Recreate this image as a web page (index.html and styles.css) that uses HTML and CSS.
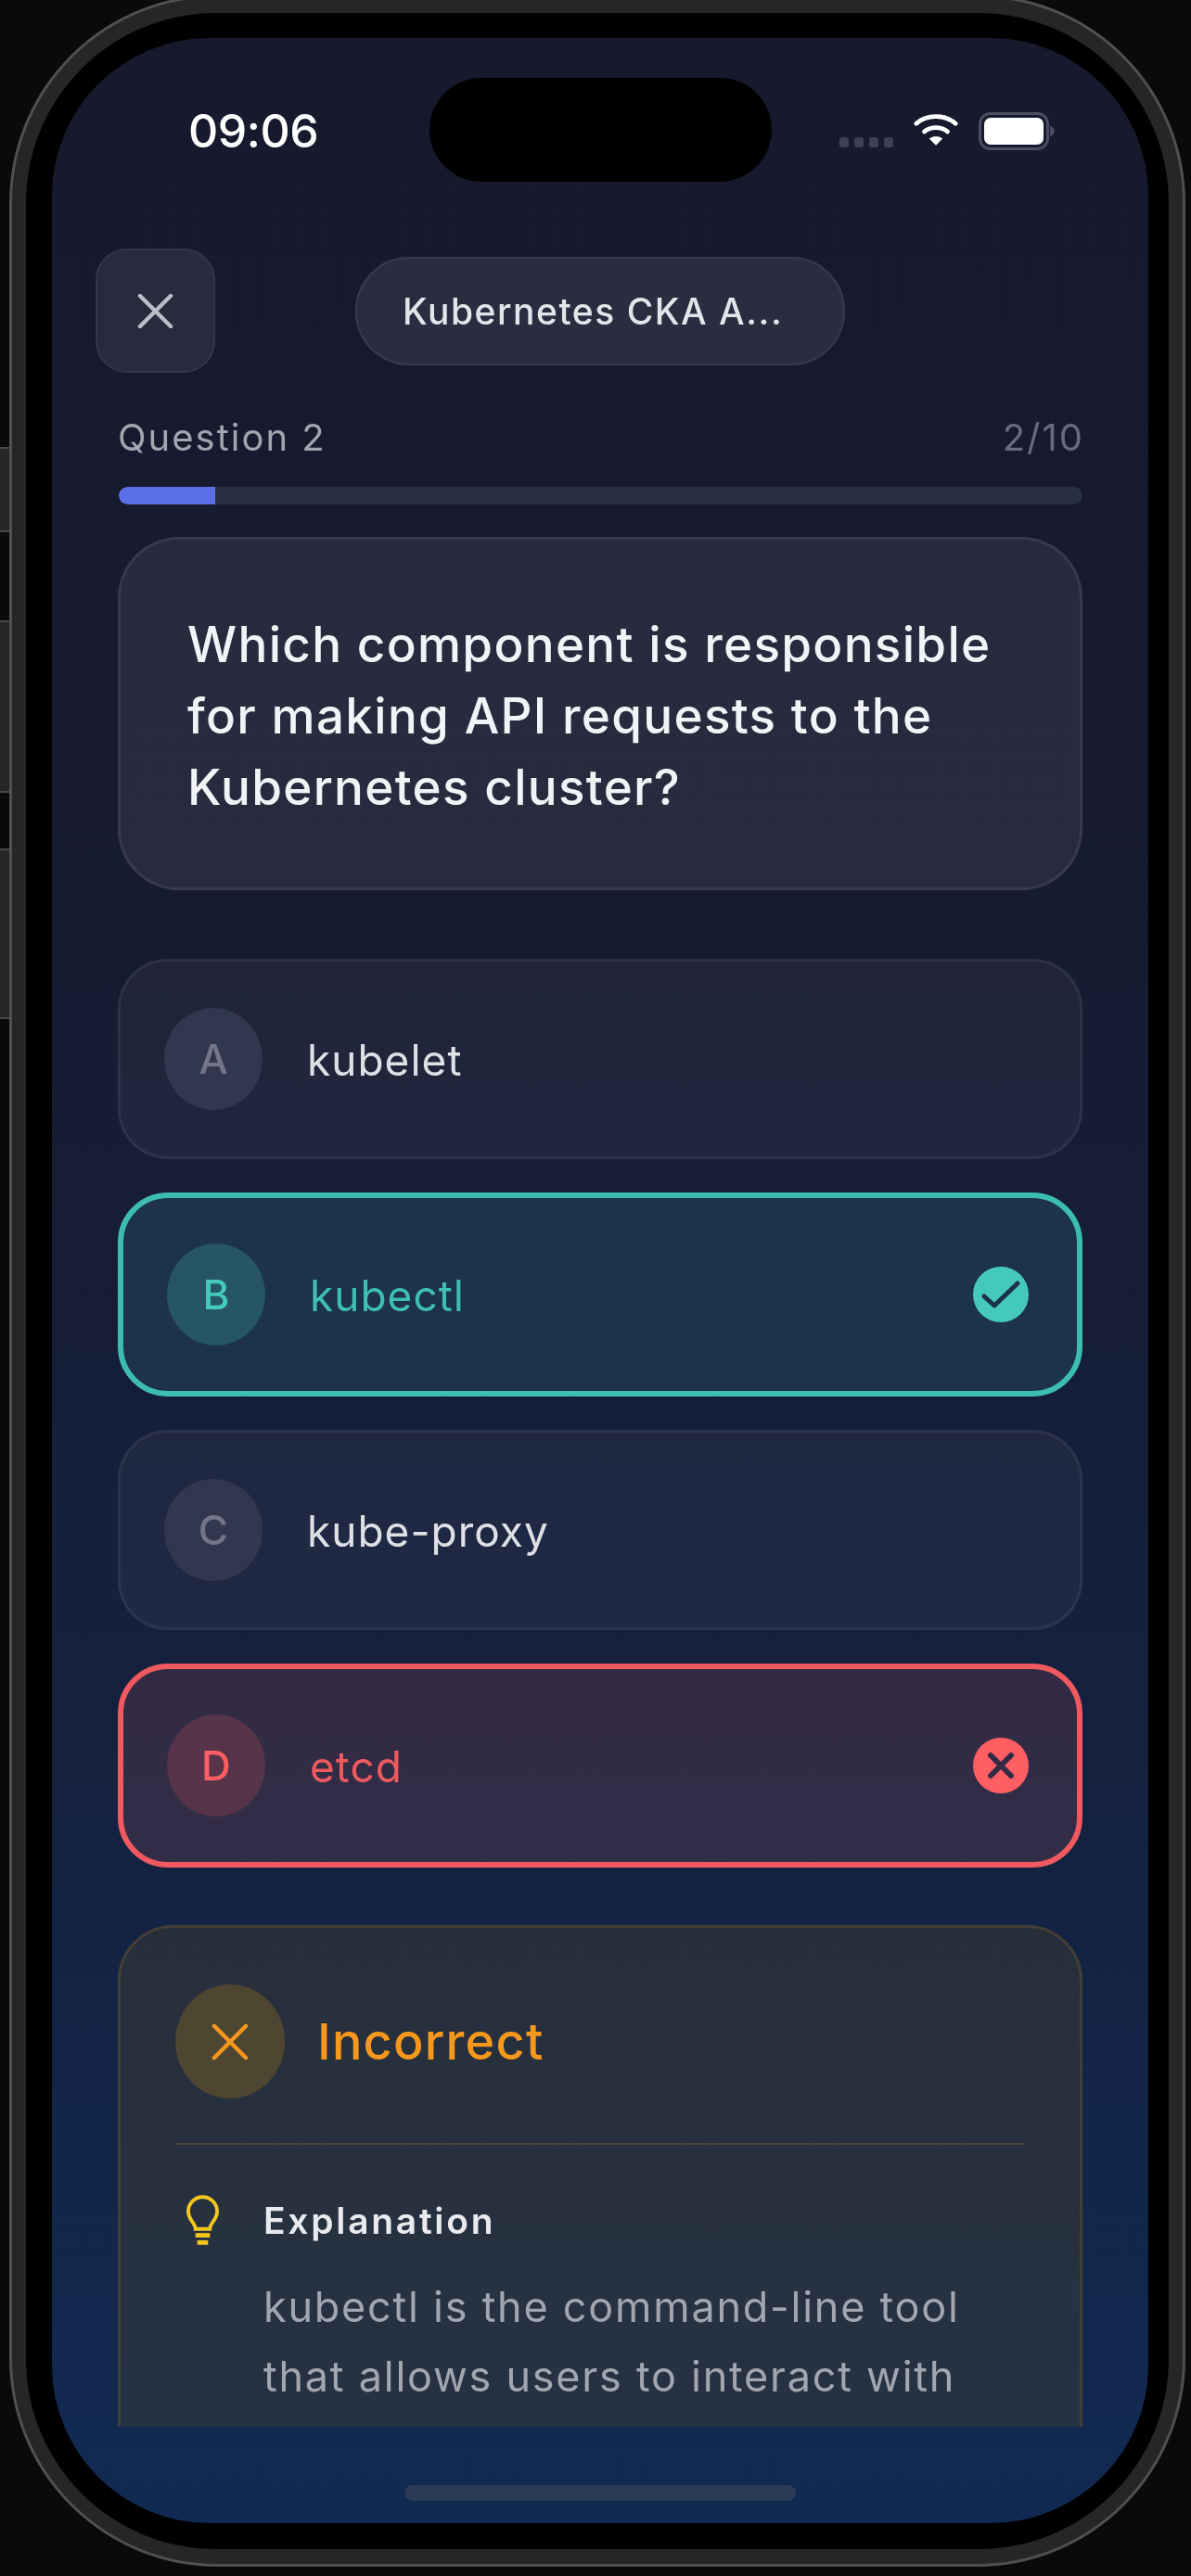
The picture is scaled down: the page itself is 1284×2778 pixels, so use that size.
FILE: index.html
```html
<!DOCTYPE html>
<html lang="en">
<head>
<meta charset="utf-8">
<title>Quiz</title>
<link rel="stylesheet" href="styles.css">
</head>
<body>
<div class="phone">
  <span class="side-btn side-mute"></span>
  <span class="side-btn side-up"></span>
  <span class="side-btn side-down"></span>
  <div class="bezel">
    <div class="screen">
      <div class="island"></div>
      <div class="status">
        <span class="time">09:06</span>
        <div class="status-icons">
          <div class="signal"><i></i><i></i><i></i><i></i></div>
          <svg class="wifi" viewBox="0 0 50 38" fill="none" stroke="#fff" stroke-width="5" stroke-linecap="round">
            <path d="M3 12.500C15 2 35 2 47 12.500"/>
            <path d="M12 21.500C19 15.500 31 15.500 38 21.500"/>
            <path d="M25 37L17.500 29.500C21.500 26 28.500 26 32.500 29.500Z" fill="#fff" stroke="none"/>
          </svg>
          <svg class="battery" viewBox="0 0 82 41">
            <rect x="1.500" y="1.500" width="73" height="38" rx="11" fill="none" stroke="#4b4d60" stroke-width="3"/>
            <rect x="6" y="6" width="64" height="29" rx="7" fill="#fff"/>
            <path d="M77 15c3 1 5 3 5 5.500s-2 4.500-5 5.500z" fill="#4b4d60"/>
          </svg>
        </div>
      </div>
      <div class="topbar">
        <button class="close-btn" type="button">
          <svg viewBox="0 0 40 38" fill="none" stroke="#bcbdc6" stroke-width="4.500" stroke-linecap="round"><path d="M3 2L37 36M37 2L3 36"/></svg>
        </button>
        <div class="title-pill">Kubernetes CKA A...</div>
      </div>
      <div class="progress-head">
        <span class="progress-label">Question 2</span>
        <span class="progress-count">2/10</span>
      </div>
      <div class="track"><div class="fill" style="width:10%"></div></div>
      <div class="scroll">
        <div class="question">Which component is responsible for making API requests to the Kubernetes cluster?</div>
        <div class="options">
          <div class="option">
            <span class="letter">A</span>
            <span class="option-text">kubelet</span>
          </div>
          <div class="option correct">
            <span class="letter">B</span>
            <span class="option-text">kubectl</span>
            <svg class="mark" viewBox="0 0 60 60"><circle cx="30" cy="30" r="30" fill="#45c9bb"/><path d="M12 32L23 42L48 18" fill="none" stroke="#1c3349" stroke-width="5" stroke-linecap="round" stroke-linejoin="round"/></svg>
          </div>
          <div class="option">
            <span class="letter">C</span>
            <span class="option-text">kube-proxy</span>
          </div>
          <div class="option wrong">
            <span class="letter">D</span>
            <span class="option-text">etcd</span>
            <svg class="mark" viewBox="0 0 60 60"><circle cx="30" cy="30" r="30" fill="#ff5f63"/><path d="M19 19L41 41M41 19L19 41" fill="none" stroke="#332b45" stroke-width="6" stroke-linecap="round"/></svg>
          </div>
        </div>
        <div class="feedback">
          <div class="feedback-head">
            <span class="feedback-icon">
              <svg viewBox="0 0 42 42" fill="none" stroke="#f7981d" stroke-width="4.500" stroke-linecap="round"><path d="M3 3L39 39M39 3L3 39"/></svg>
            </span>
            <span class="feedback-title">Incorrect</span>
          </div>
          <div class="explain">
            <svg class="bulb" viewBox="0 0 38 56" fill="none" stroke="#f4c51d" stroke-width="4">
              <path d="M11 37C11 30 3 27 3 17.500A16 16 0 0 1 35 17.500C35 27 27 30 27 37Z"/>
              <path d="M11 44H27" stroke-width="5"/>
              <path d="M13 52H25" stroke-width="5"/>
            </svg>
            <div class="explain-body">
              <div class="explain-title">Explanation</div>
              <p class="explain-text">kubectl is the command-line tool that allows users to interact with the Kubernetes cluster by sending API requests.</p>
            </div>
          </div>
        </div>
      </div>
      <div class="home-zone"><span class="home-bar"></span></div>
    </div>
  </div>
</div>
</body>
</html>
```
FILE: styles.css
```css
* { box-sizing: border-box; }
html, body { margin: 0; height: 100%; }
body {
  width: 1284px;
  height: 2778px;
  overflow: hidden;
  background: #0a0a0a;
  font-family: Inter, "Liberation Sans", sans-serif;
  color: #fff;
}
.phone {
  position: relative;
  width: 1268px;
  height: 2774px;
  margin: -6px 0 0 10px;
  padding: 17px 15px 16px 15px;
  background: #262626;
  border: 3px solid #505050;
  border-radius: 225px;
  filter: blur(0.7px);
}
.side-btn {
  position: absolute;
  left: -13px;
  width: 10px;
  background: #262626;
  border-top: 2px solid #484848;
  border-bottom: 2px solid #484848;
}
.side-mute { top: 485px; height: 92px; }
.side-up { top: 672px; height: 186px; }
.side-down { top: 918px; height: 184px; }
.bezel {
  height: 100%;
  padding: 27px 22px 28px 28px;
  background: #000;
  border-radius: 205px;
}
.screen {
  position: relative;
  display: flex;
  flex-direction: column;
  height: 100%;
  overflow: hidden;
  border-radius: 170px;
  background: linear-gradient(180deg, #171a2d 0%, #171b30 35%, #14213f 70%, #122a53 100%);
}
.island {
  position: absolute;
  top: 43px;
  left: 407px;
  width: 369px;
  height: 112px;
  border-radius: 56px;
  background: #000;
}
.status {
  display: flex;
  align-items: center;
  justify-content: space-between;
  height: 200px;
  padding: 0 101px 0 147px;
  flex: none;
  margin-bottom: 27px;
}
.time {
  font-size: 50px;
  font-weight: 500;
  line-height: 200px;
  letter-spacing: -0.5px;
}
.status-icons {
  display: flex;
  align-items: flex-start;
  height: 41px;
}
.signal {
  display: flex;
  gap: 6px;
  margin: 27px 22px 0 0;
}
.signal i {
  width: 10px;
  height: 11px;
  border-radius: 3px;
  background: #3e4053;
}
.wifi { width: 48px; height: 37px; margin-right: 22px; }
.battery { width: 82px; height: 41px; }
.topbar {
  display: flex;
  align-items: center;
  flex: none;
  height: 134px;
  padding-left: 47px;
}
.close-btn {
  display: flex;
  align-items: center;
  justify-content: center;
  width: 129px;
  height: 134px;
  padding: 0;
  background: #282b3e;
  border: 2px solid #34374a;
  border-radius: 34px;
}
.close-btn svg { width: 39px; height: 37px; }
.title-pill {
  width: 528px;
  height: 117px;
  margin-left: 151px;
  padding-left: 49px;
  font-size: 39px;
  font-weight: 500;
  line-height: 113px;
  letter-spacing: 1.500px;
  white-space: nowrap;
  color: #e4e5ea;
  background: #2a2d40;
  border: 2px solid #383b4e;
  border-radius: 58px;
}
.progress-head {
  display: flex;
  justify-content: space-between;
  align-items: center;
  flex: none;
  height: 50px;
  margin-top: 44px;
  padding: 0 69px 0 71px;
  font-size: 40px;
  letter-spacing: 2px;
  color: #a2a4af;
}
.progress-count { color: #686b7c; }
.track {
  flex: none;
  width: 1039px;
  height: 19px;
  margin: 29px 0 0 72px;
  overflow: hidden;
  border-radius: 10px;
  background: #2a2e42;
}
.fill {
  height: 100%;
  background: #5a6fe3;
  border-radius: 10px 0 0 10px;
}
.scroll {
  flex: 1;
  min-height: 0;
  overflow: hidden;
  padding: 35px 71px 0 71px;
}
.question {
  height: 381px;
  padding: 75px 55px 0 72px;
  font-size: 53px;
  font-weight: 500;
  line-height: 77px;
  letter-spacing: 1.300px;
  color: #f2f3f6;
  background: rgba(255,255,255,0.072);
  border: 3px solid rgba(255,255,255,0.075);
  border-radius: 66px;
}
.options {
  display: flex;
  flex-direction: column;
  gap: 36px;
  margin-top: 74px;
}
.option {
  display: flex;
  align-items: center;
  height: 216px;
  padding-left: 47px;
  background: rgba(255,255,255,0.045);
  border: 3px solid rgba(255,255,255,0.06);
  border-radius: 54px;
}
.letter {
  display: flex;
  align-items: center;
  justify-content: center;
  width: 106px;
  height: 110px;
  flex: none;
  font-size: 44px;
  font-weight: 500;
  color: #73768a;
  background: #33374d;
  border-radius: 50%;
}
.option-text {
  flex: 1;
  margin-left: 48px;
  padding-top: 2px;
  font-size: 46px;
  letter-spacing: 1px;
  color: #dfe0e6;
}
.mark { width: 60px; height: 62px; margin-right: 52px; }
.correct, .wrong { height: 220px; border-width: 6px; padding-left: 47px; }
.correct { background: #1c3349; border-color: #3dbdb0; }
.correct .letter { background: #265566; color: #45c9bb; }
.correct .option-text { color: #3fbfb2; }
.wrong { background: linear-gradient(180deg, #322a42, #332d48); border-color: #f0595f; }
.wrong .letter { background: #57344a; color: #ff5f63; }
.wrong .option-text { color: #ef5a60; }
.feedback {
  height: 640px;
  margin-top: 62px;
  padding: 61px 59px 0 59px;
  background: linear-gradient(180deg, #282f3b 0%, #253345 100%);
  border: 3px solid #433f36;
  border-radius: 60px;
}
.feedback-head {
  display: flex;
  align-items: center;
  padding-bottom: 48px;
  border-bottom: 2px solid #4b4537;
}
.feedback-icon {
  display: flex;
  align-items: center;
  justify-content: center;
  width: 118px;
  height: 123px;
  background: #4f4631;
  border-radius: 50%;
}
.feedback-icon svg { width: 40px; height: 40px; }
.feedback-title {
  margin-left: 35px;
  font-size: 54px;
  font-weight: 500;
  letter-spacing: 1.200px;
  color: #f7981d;
}
.explain {
  display: flex;
  align-items: flex-start;
  padding: 54px 0 0 11px;
}
.bulb { width: 37px; height: 56px; flex: none; }
.explain-body { flex: 1; margin-left: 47px; }
.explain-title {
  font-size: 39px;
  font-weight: 600;
  line-height: 56px;
  letter-spacing: 2.700px;
  color: #e9eaee;
}
.explain-text {
  margin: 27px 0 0;
  font-size: 45px;
  line-height: 75px;
  letter-spacing: 1.750px;
  color: #a2a6b0;
}
.home-zone {
  display: flex;
  align-items: flex-start;
  justify-content: center;
  flex: none;
  height: 104px;
  padding-top: 63px;
}
.home-bar {
  width: 422px;
  height: 17px;
  border-radius: 9px;
  background: #2b3b55;
}
```
